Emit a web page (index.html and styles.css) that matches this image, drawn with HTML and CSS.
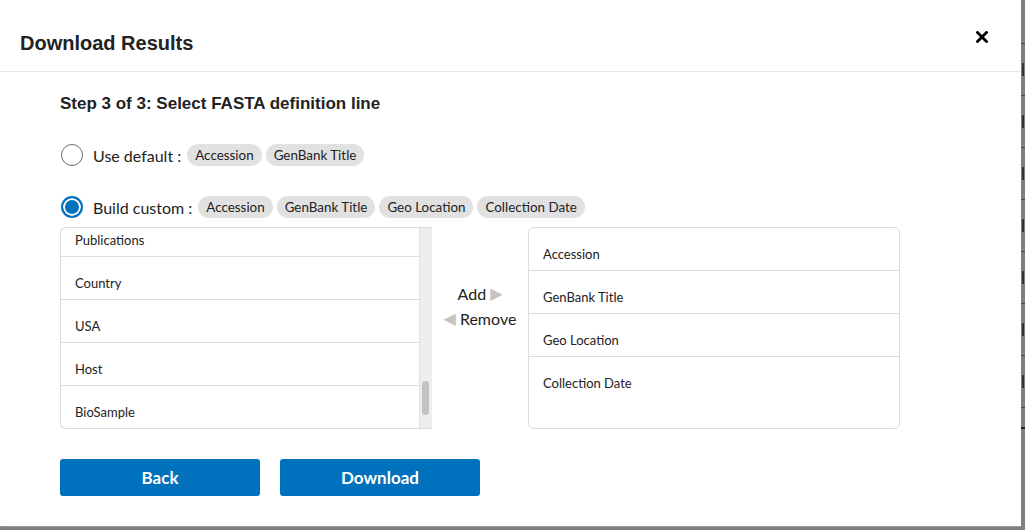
FILE: index.html
```html
<!DOCTYPE html>
<html>
<head>
<meta charset="utf-8">
<link rel="stylesheet" href="styles.css">
</head>
<body>
<div class="screen">
  <div class="modal">
    <div class="modal-header">
      <h1 class="modal-title">Download Results</h1>
      <button class="close" aria-label="Close">
        <svg width="12" height="12" viewBox="0 0 12 12"><path d="M1.5 1.5 L10.5 10.5 M10.5 1.5 L1.5 10.5" stroke="#000" stroke-width="2.8" stroke-linecap="square"/></svg>
      </button>
    </div>
    <div class="modal-body">
      <h2 class="step">Step 3 of 3: Select FASTA definition line</h2>
      <div class="option opt-default">
        <span class="radio"></span>
        <span class="opt-label">Use default :</span>
        <span class="chip">Accession</span>
        <span class="chip">GenBank Title</span>
      </div>
      <div class="option opt-custom">
        <span class="radio checked"></span>
        <span class="opt-label">Build custom :</span>
        <span class="chip">Accession</span>
        <span class="chip">GenBank Title</span>
        <span class="chip">Geo Location</span>
        <span class="chip">Collection Date</span>
      </div>
      <div class="picker">
        <div class="list list-left">
          <div class="list-scroll">
            <div class="list-inner">
              <div class="row">Publications</div>
              <div class="row">Country</div>
              <div class="row">USA</div>
              <div class="row">Host</div>
              <div class="row last">BioSample</div>
            </div>
          </div>
          <div class="scrollbar"><div class="thumb"></div></div>
        </div>
        <div class="mover">
          <div class="move">Add <span class="tri">&#9654;</span></div>
          <div class="move"><span class="tri">&#9664;</span> Remove</div>
        </div>
        <div class="list list-right">
          <div class="list-inner">
            <div class="row">Accession</div>
            <div class="row">GenBank Title</div>
            <div class="row">Geo Location</div>
            <div class="row last">Collection Date</div>
          </div>
        </div>
      </div>
      <div class="actions">
        <button class="btn">Back</button>
        <button class="btn">Download</button>
      </div>
    </div>
  </div>
  <div class="backdrop-strip">
    <div class="bg-row first"></div>
    <div class="bg-row"><span class="mark"></span></div>
    <div class="bg-row"><span class="mark"></span></div>
    <div class="bg-row"><span class="mark"></span></div>
    <div class="bg-row"><span class="mark"></span></div>
    <div class="bg-row"><span class="mark"></span></div>
    <div class="bg-row"><span class="mark"></span></div>
    <div class="bg-row"><span class="mark"></span></div>
    <div class="bg-row short"></div>
  </div>
</div>
</body>
</html>
```

FILE: styles.css
```css
* { box-sizing: border-box; }
html, body { margin: 0; padding: 0; }
body {
  background: #7f7f7f;
  width: 1025px;
  height: 530px;
  overflow: hidden;
  font-family: Lato, "Liberation Sans", sans-serif;
  color: #222;
}
.screen {
  display: flex;
  align-items: flex-start;
  height: 530px;
}
.modal {
  width: 1021px;
  height: 526px;
  background: #fff;
  flex: none;
  display: flex;
  flex-direction: column;
  box-shadow: 1px 1px 0 #9a9a9a;
}
.modal-header {
  height: 72px;
  border-bottom: 1px solid #e6e6e6;
  display: flex;
  align-items: flex-start;
  justify-content: space-between;
  padding: 0 33px 0 20px;
}
.modal-title {
  margin: 32px 0 0;
  font-family: "Liberation Sans", Arial, sans-serif;
  font-weight: bold;
  font-size: 20px;
  line-height: 23px;
  color: #222;
}
.close {
  margin-top: 31px;
  padding: 0;
  border: 0;
  background: none;
  width: 12px;
  height: 12px;
  display: flex;
}
.modal-body {
  padding: 0 0 0 60px;
  display: flex;
  flex-direction: column;
}
.step {
  margin: 22px 0 0;
  font-family: "Liberation Sans", Arial, sans-serif;
  font-weight: bold;
  font-size: 17px;
  line-height: 20px;
  color: #222;
}
.option {
  display: flex;
  align-items: center;
  height: 22px;
}
.opt-default { margin-top: 30px; }
.opt-custom { margin-top: 30px; }
.radio {
  width: 22px;
  height: 22px;
  border-radius: 50%;
  border: 1px solid #6e6e6e;
  margin-left: 1px;
  flex: none;
  background: #fff;
}
.radio.checked {
  border: 2px solid #0071bc;
  background: #0071bc;
  box-shadow: inset 0 0 0 2px #fff;
}
.opt-label {
  margin-left: 10px;
  margin-right: 6px;
  font-size: 16px;
  color: #222;
}
.chip {
  height: 22px;
  line-height: 22px;
  padding: 0 8px;
  border-radius: 11px;
  background: #e1e1e1;
  font-size: 13.4px;
  color: #222;
  margin-right: 4px;
}
.picker {
  margin-top: 9px;
  display: flex;
  height: 202px;
}
.list {
  border: 1px solid #dcdcdc;
  border-radius: 6px;
  width: 372px;
  height: 202px;
  overflow: hidden;
  background: #fff;
}
.list-left {
  display: flex;
  border-right: 0;
  border-radius: 6px 0 0 6px;
}
.list-scroll {
  flex: 1;
  overflow: hidden;
}
.list-left .list-inner { margin-top: -14px; }
.row {
  padding: 18px 14px 7px;
  line-height: 17px;
  font-size: 13px;
  border-bottom: 1px solid #dcdcdc;
  color: #222;
}
.row.last { border-bottom: 0; }
.scrollbar {
  width: 13px;
  background: #eeeeee;
  border-left: 1px solid #e0e0e0;
  position: relative;
  flex: none;
}
.thumb {
  position: absolute;
  left: 2px;
  width: 7px;
  top: 153px;
  height: 34px;
  border-radius: 4px;
  background: #c2c2c2;
}
.mover {
  width: 96px;
  flex: none;
  display: flex;
  flex-direction: column;
  align-items: center;
  padding-top: 54px;
  font-size: 16px;
  color: #222;
}
.move {
  height: 25px;
  line-height: 25px;
  display: flex;
  align-items: center;
  gap: 4px;
}
.tri {
  color: #c4c4c4;
  font-size: 16px;
  line-height: 16px;
  font-family: "DejaVu Sans", sans-serif;
}
.actions {
  margin-top: 30px;
  display: flex;
  gap: 20px;
}
.btn {
  width: 200px;
  height: 37px;
  border: 0;
  border-radius: 3px;
  background: #0071bc;
  color: #fff;
  font-family: Lato, "Liberation Sans", sans-serif;
  font-weight: bold;
  font-size: 17px;
  padding: 0;
}
.backdrop-strip {
  flex: 1;
  height: 530px;
  background: #808080;
  display: flex;
  flex-direction: column;
  overflow: hidden;
}
.bg-row {
  height: 52px;
  border-bottom: 1px solid #4a4a4a;
  position: relative;
  flex: none;
}
.bg-row.first { height: 44px; }
.bg-row.short { height: 21px; border-bottom: 2px solid #222; }
.mark {
  position: absolute;
  left: 1px;
  top: 19px;
  width: 2px;
  height: 13px;
  background: #333;
}
```
